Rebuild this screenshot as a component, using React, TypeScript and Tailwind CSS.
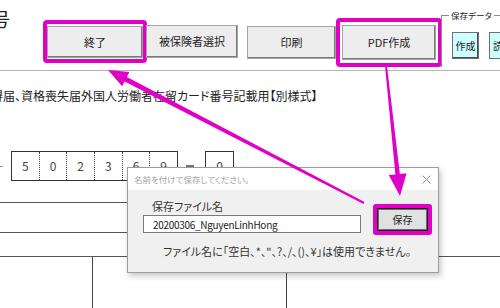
import * as React from 'react';

// tapered arrow polygon, thick at the head end
function arrowPoints(x1: number, y1: number, x2: number, y2: number, tw: number, nw: number, hl: number, hw: number) {
  const dx = x2 - x1;
  const dy = y2 - y1;
  const len = Math.hypot(dx, dy);
  const ux = dx / len;
  const uy = dy / len;
  const px = -uy;
  const py = ux;
  const bx = x2 - ux * hl;
  const by = y2 - uy * hl;
  const pts = [
    [x1 + (px * tw) / 2, y1 + (py * tw) / 2],
    [bx + (px * nw) / 2, by + (py * nw) / 2],
    [bx + (px * hw) / 2, by + (py * hw) / 2],
    [x2, y2],
    [bx - (px * hw) / 2, by - (py * hw) / 2],
    [bx - (px * nw) / 2, by - (py * nw) / 2],
    [x1 - (px * tw) / 2, y1 - (py * tw) / 2],
  ];
  return pts.map((p) => p[0].toFixed(1) + ',' + p[1].toFixed(1)).join(' ');
}

function XlButton(props: { label: string; className?: string }) {
  return (
    <div
      className={
        'flex items-center justify-center bg-[#ededed] border border-[#a3a3a3] shadow-[inset_-1px_-1px_0_#7a7a7a] text-[11px] text-[#222] shrink-0 ' +
        (props.className || '')
      }
    >
      {props.label}
    </div>
  );
}

const digits = ['5', '0', '2', '3', '6', '9'];

export default function App() {
  return (
    <div className="relative w-[500px] h-[308px] overflow-hidden bg-white font-['Noto_Sans_CJK_JP',sans-serif] [font-feature-settings:'palt'] text-[#222]">
      {/* toolbar */}
      <div className="flex h-[71px] border-b border-[#b4b4b4]">
        <div className="w-[43px] shrink-0 overflow-hidden">
          <span className="block ml-[-9px] mt-[7px] text-[19px] leading-[24px] whitespace-nowrap">号</span>
        </div>
        <div className="mt-[20px] w-[104px] h-[43px] shrink-0 border-[4px] border-[#e100c6] rounded-[4px] pt-[2px]">
          <XlButton label="終了" className="w-full h-[32px]" />
        </div>
        <XlButton label="被保険者選択" className="mt-[25px] ml-[-1px] w-[92px] h-[33px]" />
        <XlButton label="印刷" className="mt-[26px] ml-[9px] w-[89px] h-[33px]" />
        <div className="mt-[18px] w-[106px] h-[49px] shrink-0 border-[4px] border-[#e100c6] rounded-[4px] px-[2px] pt-[3px]">
          <XlButton label="PDF作成" className="w-full h-[35px] border-[#8a8a8a]" />
        </div>
        <div className="relative ml-[-1px] mt-[15px] flex-1 h-[52px] border-l border-t border-[#8c8c8c]">
          <span className="absolute top-[-7px] left-[7px] bg-white px-[2px] text-[8.5px] leading-[12px] whitespace-nowrap">保存データ</span>
          <div className="flex gap-[10px] pl-[10px] pt-[16px]">
            <div className="flex items-center justify-center w-[27px] h-[27px] shrink-0 bg-[#ccffff] border border-[#707070] shadow-[inset_-1px_-1px_0_#4a4a4a] text-[10px]">作成</div>
            <div className="flex items-center pl-[3px] w-[27px] h-[27px] shrink-0 bg-[#ccffff] border border-[#707070] text-[10px]">読込</div>
          </div>
        </div>
      </div>

      {/* form title */}
      <p className="mt-[17px] ml-[-9px] text-[12px] leading-[16px] whitespace-nowrap">
        得届、資格喪失届外国人労働者在留カード番号記載用【別様式】
      </p>

      {/* card number boxes */}
      <div className="flex items-stretch mt-[47px] h-[30px]">
        <span className="self-center w-[3px] h-[1px] bg-[#8090a8]" />
        <div className="flex ml-[8px] w-[167px] border border-[#333]">
          {digits.map((d, i) => (
            <div
              key={i}
              className={
                'flex-1 flex items-center justify-center text-[12px] text-[#444] ' +
                (i < digits.length - 1 ? 'border-r border-dotted border-[#444]' : '')
              }
            >
              {d}
            </div>
          ))}
        </div>
        <span className="self-center ml-[8px] w-[8px] h-[2px] bg-[#777]" />
        <div className="flex items-center justify-center ml-[11px] w-[29px] border border-[#333] text-[12px] text-[#444]">0</div>
      </div>

      {/* grid lines */}
      <div className="h-[21px]" />
      <div className="w-[300px] h-[30px] border-t border-[#555]" />
      <div className="w-[300px] h-[24px] border-t border-[#555]" />
      <div className="flex h-[60px] border-t border-[#555]">
        <div className="w-[93px] border-r border-[#444]" />
        <div className="w-[194px] border-r border-[#444]" />
      </div>

      {/* save dialog */}
      <div className="absolute left-[127px] top-[167px] w-[312px] h-[106px] flex flex-col border border-[#9c9c9c] bg-[#f0f0f0] shadow-[2px_3px_6px_rgba(0,0,0,0.22)]">
        <div className="flex items-center h-[22px] bg-white pl-[6px] pr-[7px]">
          <span className="text-[8.5px] text-[#a4a4a4] whitespace-nowrap">名前を付けて保存してください。</span>
          <svg className="ml-auto" width="9" height="9" viewBox="0 0 9 9">
            <path d="M0.5 0.5 L8.5 8.5 M8.5 0.5 L0.5 8.5" stroke="#8a8a8a" strokeWidth="1" />
          </svg>
        </div>
        <div className="flex items-start">
          <div className="pl-[15px]">
            <div className="ml-[9px] pt-[9px] text-[11px] leading-[14px] text-[#333]">保存ファイル名</div>
            <div className="flex items-center mt-[2px] w-[218px] h-[18px] bg-white border border-[#7a7a7a] pl-[9px] text-[10px] tracking-[-0.3px] text-[#222]">
              20200306_NguyenLinhHong
            </div>
          </div>
          <div className="ml-[12px] mt-[14px] w-[59px] h-[31px] border-[4px] border-[#e100c6] rounded-[3px]">
            <div className="flex items-center justify-center w-full h-full bg-[#e1e1e1] border border-[#222] shadow-[inset_0_0_0_1px_#6a6a6a] text-[10px]">
              保存
            </div>
          </div>
        </div>
        <div className="mt-[9px] pl-[35px] text-[11px] leading-[14px] text-[#333] whitespace-nowrap">
          ファイル名に「空白、*、"、?、/、()、¥」は使用できません。
        </div>
      </div>

      {/* callout arrows */}
      <svg className="absolute inset-0 pointer-events-none" width="500" height="308" viewBox="0 0 500 308">
        <polygon points={arrowPoints(364, 203, 108, 70, 2, 5, 20, 16)} fill="#e100c6" />
        <polygon points={arrowPoints(386, 66, 400, 196, 2, 4.5, 22, 18)} fill="#e100c6" />
      </svg>
    </div>
  );
}
